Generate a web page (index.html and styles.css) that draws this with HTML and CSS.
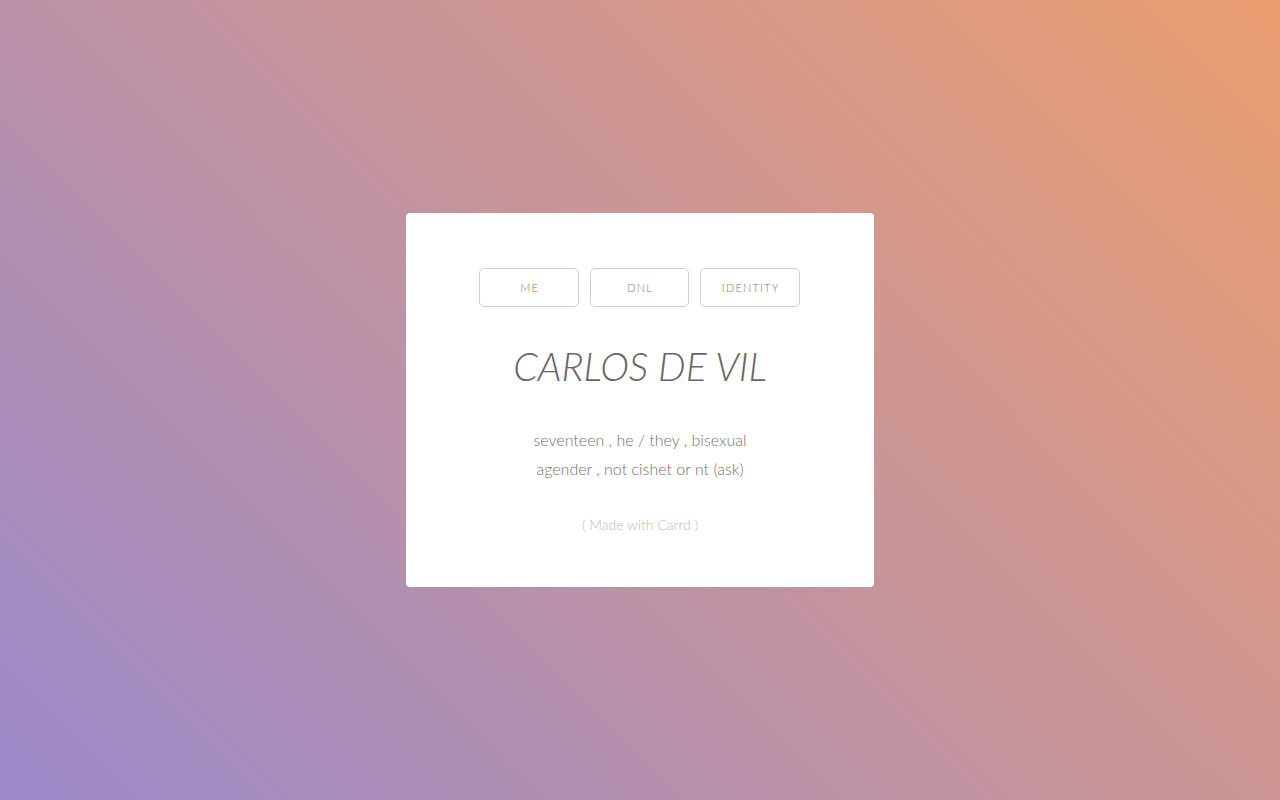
FILE: index.html
```html
<!DOCTYPE html>
<html>
<head>
<meta charset="utf-8">
<link rel="stylesheet" href="styles.css">
</head>
<body>
<div class="page">
  <div class="card">
    <nav class="buttons">
      <a class="btn">ME</a>
      <a class="btn">DNL</a>
      <a class="btn">IDENTITY</a>
    </nav>
    <h1 class="title">CARLOS DE VIL</h1>
    <p class="bio">seventeen , he / they , bisexual<br>agender , not cishet or nt (ask)</p>
    <p class="credit">( Made with Carrd )</p>
  </div>
</div>
</body>
</html>
```
FILE: styles.css
```css
html, body {
  margin: 0;
  padding: 0;
  height: 100%;
}
body {
  background: linear-gradient(45deg, #9b89cb 0%, #ec9e70 100%);
  font-family: Lato, "Open Sans", sans-serif;
}
.page {
  min-height: 100vh;
  display: flex;
  align-items: center;
  justify-content: center;
}
.card {
  width: 468px;
  height: 374px;
  box-sizing: border-box;
  background: #fff;
  border-radius: 4px;
  padding: 55px 0 0;
  display: flex;
  flex-direction: column;
  align-items: center;
}
.buttons {
  display: flex;
  gap: 11px;
  margin-right: 1px;
}
.btn {
  width: 99.5px;
  height: 39px;
  box-sizing: border-box;
  border: 1px solid #cfcfcf;
  border-radius: 5px;
  display: flex;
  align-items: center;
  justify-content: center;
  font-size: 11px;
  font-weight: 300;
  letter-spacing: 1.2px;
  color: #777;
  padding-left: 1.2px;
}
.title {
  margin: 40px 0 0;
  font-size: 39px;
  font-weight: 300;
  font-style: italic;
  color: #666;
  line-height: 1;
  letter-spacing: 0;
}
.bio {
  margin: 39px 0 0;
  font-size: 16px;
  font-weight: 300;
  color: #6f6f6f;
  line-height: 29px;
  text-align: center;
}
.credit {
  margin: 33px 0 0;
  font-size: 14px;
  font-weight: 300;
  color: #bbb;
}
```
